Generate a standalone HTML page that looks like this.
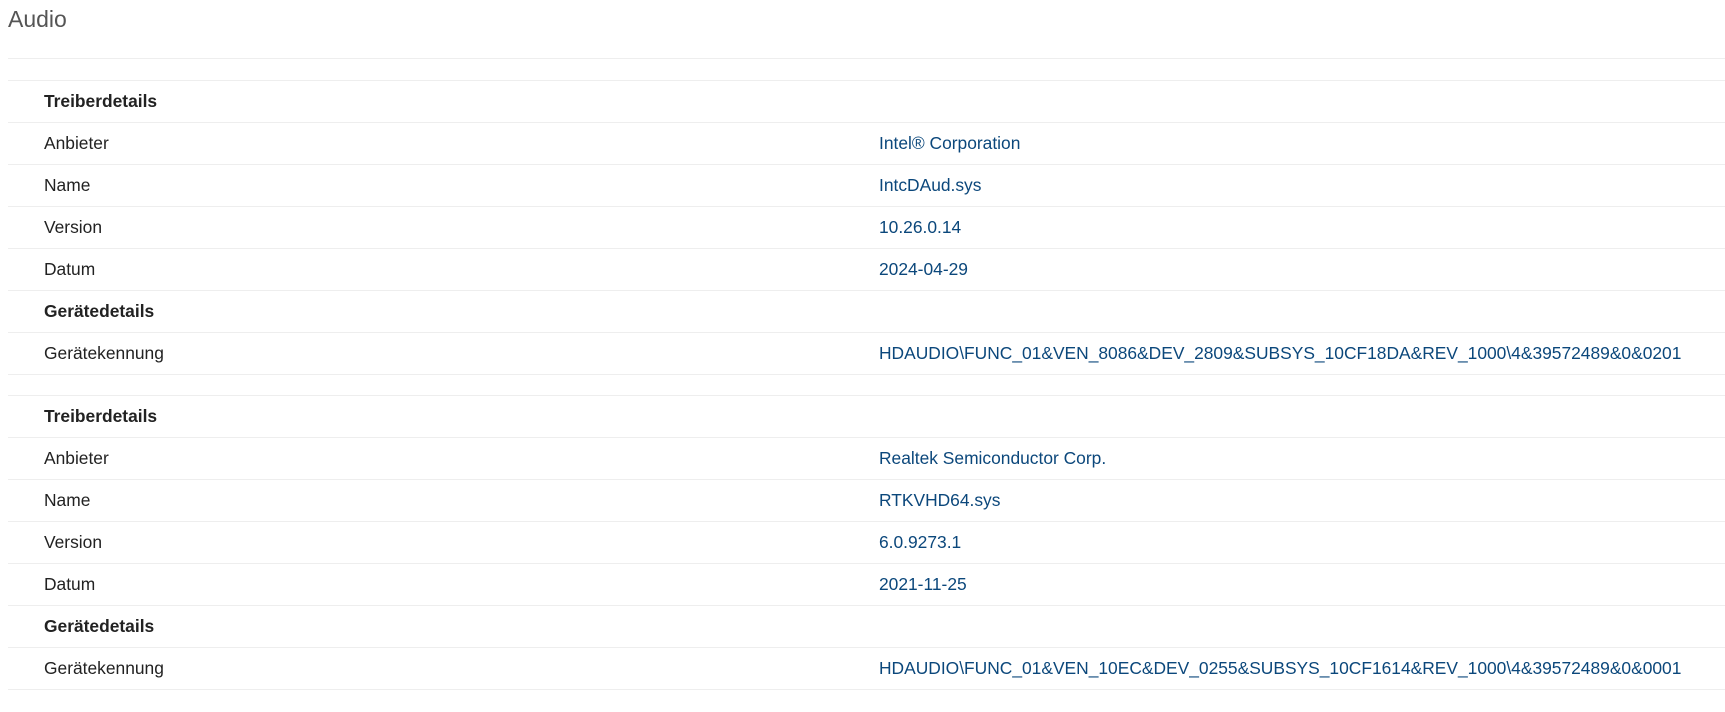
<!DOCTYPE html>
<html><head><meta charset="utf-8"><style>
body{margin:0;background:#fff;font-family:"Liberation Sans",Arial,sans-serif;width:1725px;height:712px;overflow:hidden}
h1{position:absolute;left:8px;top:6px;margin:0;font-weight:normal;font-size:23px;color:#555}
.hr{position:absolute;left:8px;right:0;top:58px;border-top:1px solid #eee}
table{position:absolute;left:8px;width:1717px;border-collapse:collapse;font-size:17.4px;color:#222}
td{height:41px;border-top:1px solid #eee;padding:0 0 0 36px;vertical-align:middle}
td.v{padding-left:0;color:#0b477b;width:846px}
tr:last-child td{border-bottom:1px solid #eee}
td.h{font-weight:bold}
</style></head><body>
<h1>Audio</h1>
<div class="hr"></div>
<table style="top:80px">
<tr><td class="h">Treiberdetails</td><td class="v"></td></tr>
<tr><td>Anbieter</td><td class="v">Intel® Corporation</td></tr>
<tr><td>Name</td><td class="v">IntcDAud.sys</td></tr>
<tr><td>Version</td><td class="v">10.26.0.14</td></tr>
<tr><td>Datum</td><td class="v">2024-04-29</td></tr>
<tr><td class="h">Gerätedetails</td><td class="v"></td></tr>
<tr><td>Gerätekennung</td><td class="v">HDAUDIO\FUNC_01&amp;VEN_8086&amp;DEV_2809&amp;SUBSYS_10CF18DA&amp;REV_1000\4&amp;39572489&amp;0&amp;0201</td></tr>
</table>
<table style="top:395px">
<tr><td class="h">Treiberdetails</td><td class="v"></td></tr>
<tr><td>Anbieter</td><td class="v">Realtek Semiconductor Corp.</td></tr>
<tr><td>Name</td><td class="v">RTKVHD64.sys</td></tr>
<tr><td>Version</td><td class="v">6.0.9273.1</td></tr>
<tr><td>Datum</td><td class="v">2021-11-25</td></tr>
<tr><td class="h">Gerätedetails</td><td class="v"></td></tr>
<tr><td>Gerätekennung</td><td class="v">HDAUDIO\FUNC_01&amp;VEN_10EC&amp;DEV_0255&amp;SUBSYS_10CF1614&amp;REV_1000\4&amp;39572489&amp;0&amp;0001</td></tr>
</table>
</body></html>
